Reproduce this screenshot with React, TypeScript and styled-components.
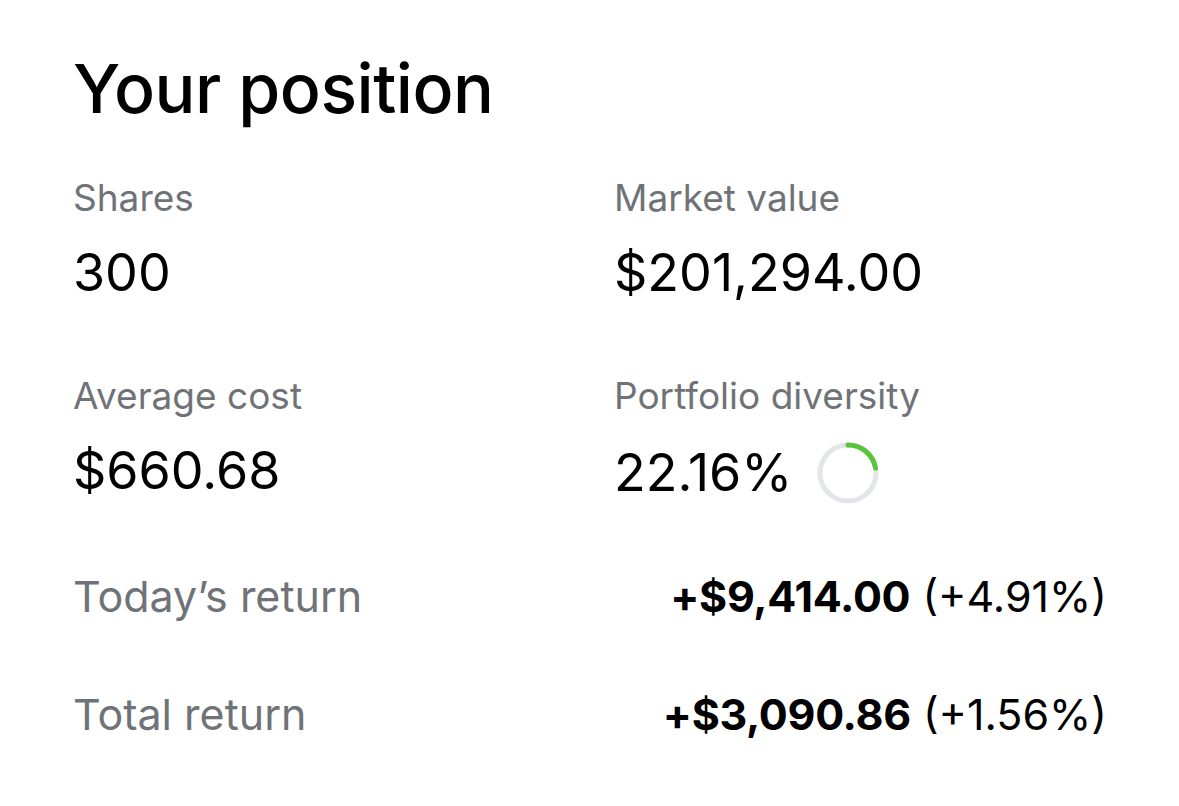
import React from 'react';
import styled, { createGlobalStyle } from 'styled-components';

const GlobalStyle = createGlobalStyle`
  html, body {
    margin: 0;
    background: #ffffff;
  }
  body {
    font-family: Inter, "Liberation Sans", sans-serif;
    color: #000000;
  }
`;

const StyledContainer = styled.div`
  width: 1179px;
  height: 806px;
  box-sizing: border-box;
  padding: 44px 75px 0 73px;
`;

const StyledTitle = styled.h1`
  margin: 0;
  font-size: 68px;
  font-weight: 500;
  letter-spacing: -0.5px;
  line-height: 88px;
`;

const StyledGrid = styled.div`
  display: grid;
  grid-template-columns: 541px 1fr;
  row-gap: 71px;
  margin-top: 44px;
`;

const StyledStat = styled.div`
  display: flex;
  flex-direction: column;
  gap: 23px;
`;

const StyledLabel = styled.div`
  font-size: 37px;
  line-height: 44px;
  color: #6f7378;
`;

const StyledValue = styled.div`
  display: flex;
  align-items: center;
  gap: 24px;
  font-size: 52px;
  line-height: 60px;
`;

const StyledReturns = styled.div`
  display: flex;
  flex-direction: column;
  gap: 68px;
  margin-top: 66px;
`;

const StyledReturnRow = styled.div`
  display: flex;
  justify-content: space-between;
  align-items: center;
  height: 50px;
`;

const StyledReturnLabel = styled.div`
  font-size: 43px;
  color: #6f7378;
`;

const StyledReturnValue = styled.div`
  font-size: 43px;
  margin-right: -3px;
`;

const StyledBold = styled.span`
  font-weight: 700;
  letter-spacing: -0.3px;
`;

const DiversityRing = ({ percent }: { percent: number }) => {
  const r = 28;
  const c = 2 * Math.PI * r;
  return (
    <svg width="64" height="64" viewBox="0 0 64 64">
      <circle cx="32" cy="32" r={r} fill="none" stroke="#e3e5e8" strokeWidth="5" />
      <circle
        cx="32"
        cy="32"
        r={r}
        fill="none"
        stroke="#5ac53b"
        strokeWidth="5"
        strokeLinecap="round"
        strokeDasharray={`${(c * percent) / 100} ${c}`}
        transform="rotate(-90 32 32)"
      />
    </svg>
  );
};

const stats = [
  { label: 'Shares', value: '300' },
  { label: 'Market value', value: '$201,294.00' },
  { label: 'Average cost', value: '$660.68' },
  { label: 'Portfolio diversity', value: '22.16%', ring: 22.16 },
];

const returns = [
  { label: 'Today’s return', amount: '+$9,414.00', pct: '(+4.91%)' },
  { label: 'Total return', amount: '+$3,090.86', pct: '(+1.56%)' },
];

export default () => {
  return (
    <StyledContainer>
      <GlobalStyle />
      <StyledTitle>Your position</StyledTitle>
      <StyledGrid>
        {stats.map((s) => (
          <StyledStat key={s.label}>
            <StyledLabel>{s.label}</StyledLabel>
            <StyledValue>
              {s.value}
              {s.ring !== undefined && <DiversityRing percent={s.ring} />}
            </StyledValue>
          </StyledStat>
        ))}
      </StyledGrid>
      <StyledReturns>
        {returns.map((r) => (
          <StyledReturnRow key={r.label}>
            <StyledReturnLabel>{r.label}</StyledReturnLabel>
            <StyledReturnValue>
              <StyledBold>{r.amount}</StyledBold> {r.pct}
            </StyledReturnValue>
          </StyledReturnRow>
        ))}
      </StyledReturns>
    </StyledContainer>
  );
};
